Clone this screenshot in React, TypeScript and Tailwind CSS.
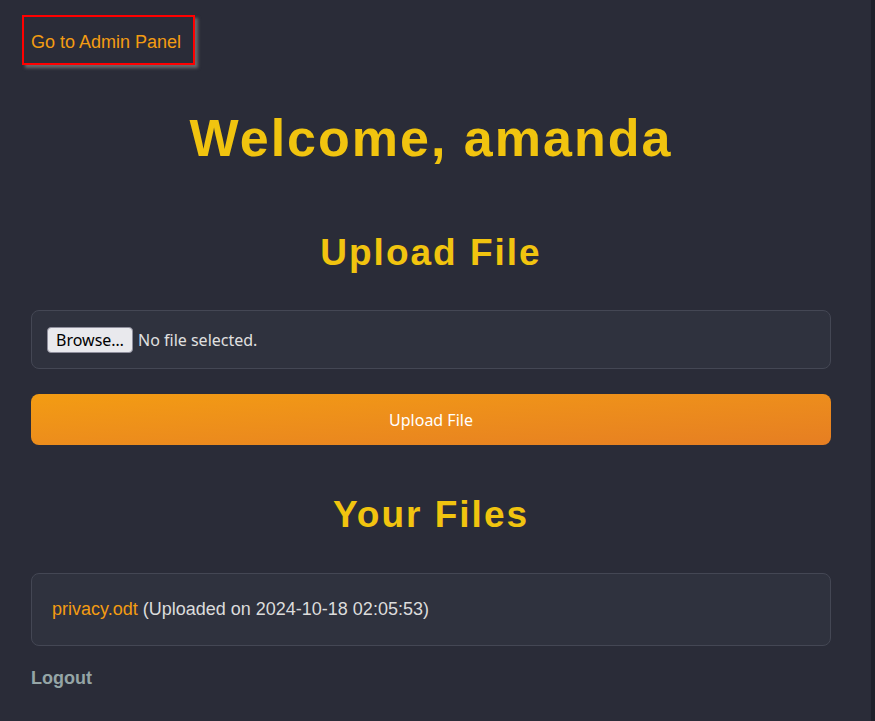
const App = () => {
  return (
    <div className="flex min-h-[721px] w-full bg-[#1f212b]" style={{ fontFamily: '"Liberation Sans", Arial, sans-serif' }}>
      <div className="w-[871px] shrink-0 bg-[#2a2c38] pt-[15px] pb-8">
        <div className="ml-[22px] flex h-[50px] w-[173px] items-center border-2 border-[#ff0000] px-[7px] pt-[3px] shadow-[3px_3px_3px_rgba(120,120,120,0.8)]">
          <a href="#" className="text-[18px] leading-none text-[#f39c12]">
            Go to Admin Panel
          </a>
        </div>

        <div className="mx-[31px] w-[800px]">
          <h1 className="mt-[43px] text-center text-[52px] leading-[60px] font-bold tracking-[2px] text-[#f1c40f]">
            Welcome, amanda
          </h1>

          <h2 className="mt-[63px] text-center text-[37px] leading-[43px] font-bold tracking-[2px] text-[#f1c40f]">
            Upload File
          </h2>

          <div
            className="mt-[36px] flex h-[59px] items-center rounded-[8px] border border-[#444754] bg-[#2f323e] px-[15px] text-[16px] text-[#e0e0e0]"
            style={{ fontFamily: '"Noto Sans", "Open Sans", sans-serif' }}
          >
            <span className="flex h-[26px] w-[86px] items-center justify-center rounded-[4px] border border-[#8f8f9d] bg-[#e9e9ed] text-[16px] text-black">
              Browse…
            </span>
            <span className="ml-[5px]">No file selected.</span>
          </div>

          <button
            className="mt-[25px] flex h-[51px] w-full items-center justify-center rounded-[8px] bg-gradient-to-br from-[#f39c12] to-[#e67e22] text-[16px] text-white"
            style={{ fontFamily: '"Noto Sans", "Open Sans", sans-serif' }}
          >
            Upload File
          </button>

          <h2 className="mt-[48px] text-center text-[37px] leading-[43px] font-bold tracking-[2px] text-[#f1c40f]">
            Your Files
          </h2>

          <div className="mt-[37px] flex h-[73px] items-center rounded-[8px] border border-[#444754] bg-[#2f323e] px-[20px] text-[18px] text-[#dcdcdc]">
            <a href="#" className="text-[#f39c12]">
              privacy.odt
            </a>
            <span className="ml-[5px]">(Uploaded on 2024-10-18 02:05:53)</span>
          </div>

          <a href="#" className="mt-[22px] block text-[18px] leading-[21px] font-bold text-[#95a5a6]">
            Logout
          </a>
        </div>
      </div>
    </div>
  );
};

export default App;
